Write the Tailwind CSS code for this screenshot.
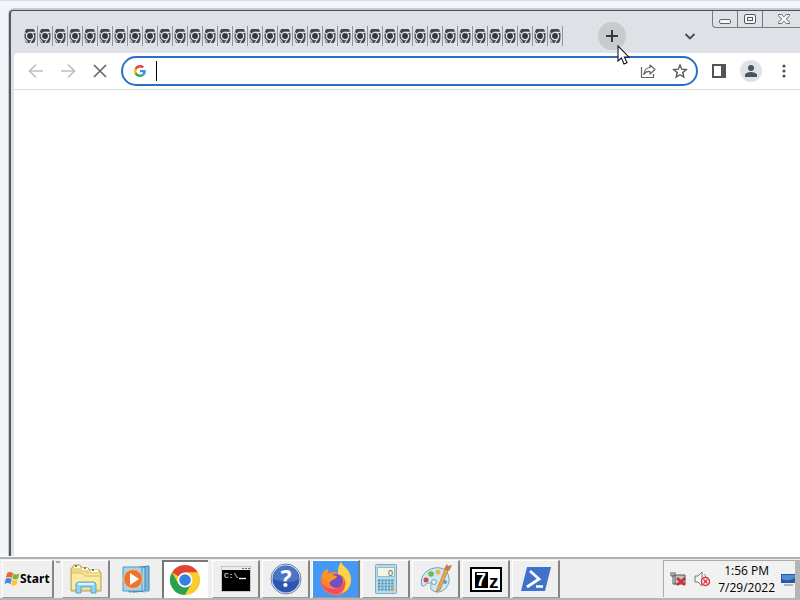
<!DOCTYPE html>
<html lang="en">
<head>
<meta charset="utf-8">
<title>Desktop</title>
<script src="https://cdn.jsdelivr.net/npm/@tailwindcss/browser@4"></script>
</head>
<body class="h-screen overflow-hidden bg-[#f2f5fa] font-['Noto_Sans','Open_Sans',sans-serif] text-black">
<svg class="hidden">
  <symbol id="mono-chrome" viewBox="0 0 12 16">
    <path d="M2.500 1h7q2 1.500 2 7t-2 7h-7q-2-1.500-2-7t2-7Z" fill="#42474c"/>
    <circle cx="6" cy="8" r="3.600" fill="#33383d" stroke="#dfe2e7" stroke-width="1.300"/>
    <path d="M1 4.500 3 7M6 4.400h5.500M9 10.500 6 15M.5 10.500 3.500 14.500" fill="none" stroke="#dfe2e7" stroke-width="1.200"/>
  </symbol>
</svg>
<div class="flex h-full flex-col">
  <main class="min-h-0 flex-1 border-t border-[#d9dde2] pt-[7px] pl-2">
    <section class="flex h-full flex-col rounded-tl-md border-t-2 border-l border-[#c5cad2]">
      <div class="flex min-h-0 flex-1 flex-col rounded-tl border-t border-l-2 border-t-[#4d5055] border-l-[#55585e] bg-[#dee1e6]">
        <header class="relative flex h-[42px] shrink-0 items-center pt-2 pl-3">
          <nav id="tabs" aria-label="Tabs" class="flex items-center"></nav>
          <button aria-label="New tab" class="ml-[35px] flex size-7 items-center justify-center rounded-full bg-[#c8cbce]">
            <svg class="size-3" viewBox="0 0 12 12" fill="none" stroke="#35383c" stroke-width="2"><path d="M6 0v12M0 6h12"/></svg>
          </button>
          <button aria-label="Search tabs" class="ml-[58px] flex size-3 items-center justify-center">
            <svg class="size-3" viewBox="0 0 12 12" fill="none" stroke="#45494e" stroke-width="1.800"><path d="m1.500 4 4.500 4.500L10.500 4"/></svg>
          </button>
          <div class="absolute top-0 right-0 flex h-[17px] overflow-hidden rounded-bl border-b border-l border-[#777a80]">
            <button aria-label="Minimize" class="flex w-[25px] items-center justify-center border-r border-[#777a80]">
              <svg class="h-4 w-3" viewBox="0 0 12 16" fill="#f5f6f8" stroke="#62666c"><rect x=".5" y="8.500" width="11" height="4" rx="1.500"/></svg>
            </button>
            <button aria-label="Restore" class="flex w-[25px] items-center justify-center border-r border-[#777a80]">
              <svg class="h-4 w-3" viewBox="0 0 12 16" fill="#f5f6f8" stroke="#55595f"><rect x=".5" y="3.500" width="11" height="9" rx="1.500"/><rect x="3.500" y="6.500" width="5" height="3"/></svg>
            </button>
            <button aria-label="Close" class="flex w-[37px] items-center justify-center pl-1">
              <svg class="h-4 w-3" viewBox="0 0 12 16" fill="#f5f6f8" stroke="#666a70"><path d="M.5 3.500h3.200L6 5.800l2.300-2.300h3.200v1.200L8.300 8l3.200 3.300v1.200H8.300L6 10.200l-2.300 2.300H.5v-1.200L3.700 8 .5 4.700Z"/></svg>
            </button>
          </div>
        </header>
        <div class="ml-[3px] flex h-[37px] shrink-0 items-center rounded-tl border-b border-[#dadce0] bg-white pr-2 pl-[14px]">
          <div class="flex shrink-0 gap-4 text-[#bcbec1]">
            <button aria-label="Back"><svg class="size-4" viewBox="0 0 16 16" fill="none" stroke="currentColor" stroke-width="1.600"><path d="M15 8H2M8 1.500 1.500 8 8 14.500"/></svg></button>
            <button aria-label="Forward"><svg class="size-4" viewBox="0 0 16 16" fill="none" stroke="currentColor" stroke-width="1.600"><path d="M1 8h13M8 1.500 14.500 8 8 14.500"/></svg></button>
            <button aria-label="Stop" class="text-[#606469]"><svg class="size-4" viewBox="0 0 16 16" fill="none" stroke="currentColor" stroke-width="1.600"><path d="m2 2 12 12M14 2 2 14"/></svg></button>
          </div>
          <div class="ml-[13px] flex h-[30px] min-w-0 flex-1 items-center rounded-full border-2 border-[#2a70c4] bg-white pr-2 pl-[11px]">
            <svg class="size-3 shrink-0" viewBox="0 0 48 48"><path fill="#EA4335" d="M24 9.500c3.540 0 6.710 1.220 9.210 3.600l6.850-6.850C35.900 2.380 30.470 0 24 0 14.620 0 6.510 5.380 2.560 13.220l7.980 6.190C12.430 13.720 17.740 9.500 24 9.500z"/><path fill="#4285F4" d="M46.980 24.550c0-1.570-.15-3.090-.38-4.550H24v9.020h12.940c-.58 2.960-2.260 5.480-4.780 7.180l7.730 6c4.510-4.180 7.090-10.360 7.090-17.650z"/><path fill="#FBBC05" d="M10.530 28.590A14.500 14.500 0 0 1 9.770 24c0-1.600.27-3.140.76-4.590l-7.980-6.190A23.900 23.900 0 0 0 0 24c0 3.880.92 7.540 2.560 10.780l7.970-6.190z"/><path fill="#34A853" d="M24 48c6.480 0 11.930-2.130 15.890-5.810l-7.730-6c-2.150 1.450-4.920 2.300-8.160 2.300-6.260 0-11.570-4.220-13.470-9.910l-7.980 6.190C6.510 42.620 14.620 48 24 48z"/></svg>
            <span class="ml-2.5 h-5 w-px shrink-0 bg-black"></span>
            <input aria-label="Address and search bar" class="min-w-0 flex-1 bg-transparent text-sm outline-none">
            <button aria-label="Share"><svg class="size-4" viewBox="0 0 16 16" fill="none" stroke="#606469" stroke-width="1.200"><path d="M1.500 4v10.500h12V11M10 2l5 4.500-5 4.500V8.500Q6 8 3.800 11.500 4.500 5 10 4.500Z" stroke-linejoin="round"/></svg></button>
            <button aria-label="Bookmark this page" class="ml-4"><svg class="size-4" viewBox="0 0 16 16" fill="none" stroke="#55595e" stroke-width="1.400"><path d="m8 2 1.700 4.200 4.600.4-3.500 3 1 4.400L8 11.700 4.200 14l1-4.400-3.500-3 4.600-.4Z"/></svg></button>
          </div>
          <button aria-label="Side panel" class="ml-[14px]"><svg class="size-[14px]" viewBox="0 0 14 14"><path fill="#505459" fill-rule="evenodd" d="M0 0h14v14H0ZM2 2v10h7V2Z"/></svg></button>
          <button aria-label="Profile" class="ml-[14px] flex size-[22px] items-center justify-center rounded-full bg-[#dfe2e7]"><svg class="size-3" viewBox="0 0 12 12" fill="#4c525b"><circle cx="6" cy="3" r="3"/><path d="M0 12v-2c0-2 4-3 6-3s6 1 6 3v2Z"/></svg></button>
          <button aria-label="Menu" class="ml-[14px]"><svg class="h-4 w-4" viewBox="0 0 16 16" fill="#505459"><circle cx="8" cy="3" r="1.600"/><circle cx="8" cy="8" r="1.600"/><circle cx="8" cy="13" r="1.600"/></svg></button>
        </div>
        <article class="ml-[3px] flex-1 bg-white"></article>
      </div>
    </section>
  </main>
  <footer class="flex h-[44px] shrink-0 border-t border-white bg-[#efefef]">
    <div class="flex min-w-0 flex-1 items-stretch border-y-2 border-t-[#b1b1b1] border-b-[#b5b5b5] pt-px pr-1">
      <button class="ml-0.5 flex w-[52px] items-center border-t border-r-2 border-b border-l border-t-white border-r-[#858585] border-b-[#999] border-l-white pl-px text-xs font-bold">
        <svg class="size-4 shrink-0" viewBox="0 0 16 16"><path fill="#ee6530" d="M3 2q3-2 6 0L8 7Q5 5 2 7Z"/><path fill="#76b83f" d="M9.500 2.500q3 2 6 0L14 7.500q-3 2-5.500 0Z"/><path fill="#418bd8" d="M1.700 8q3-2 6 0L6.500 13q-3-2-6 0Z"/><path fill="#fbc832" d="M8.300 8.500q3 2 5.700 0l-1.200 5q-3 2-5.700 0Z"/></svg>
        <span class="font-['Open_Sans','Noto_Sans',sans-serif]">Start</span>
      </button>
      <span class="mt-px ml-0.5 w-1 border-t-2 border-t-[#aaa]"></span>
      <nav aria-label="Running programs" class="ml-0.5 flex gap-0.5">
        <button aria-label="File Explorer" class="flex w-12 items-center justify-center border-t border-r-2 border-b border-l border-t-white border-r-[#858585] border-b-[#999] border-l-white">
          <svg class="size-9" viewBox="0 0 36 36"><path d="M3 30V8l3-4h6l2 3h6l2 2h9l2 3v18Z" fill="#f0d77d" stroke="#bda05a"/><path d="M6 5h6v2H6ZM14 7h6v2h-6ZM23 9h7v2h-7Z" fill="#fff"/><path d="M7 5h2M16 7h2M24 9h2" stroke="#6e8752" stroke-width="2"/><path d="M4 11h11l3 2h14v15H4Z" fill="#fbeaa2"/><path d="M3 12h11l3 3h15" stroke="#d3b565" fill="none"/><path d="M8 32V24q0-3 3-3h14q3 0 3 3v8h-5v-6H13v6Z" fill="#91d2ed" stroke="#53a9d0"/><path d="M10 23h16" stroke="#dff5ff" stroke-width="2"/></svg>
        </button>
        <button aria-label="Media Player" class="flex w-12 items-center justify-center">
          <svg class="size-8" viewBox="0 0 32 32"><path d="m13 5 16-2v25l-16 1Z" fill="#77b8db" stroke="#4386b5"/><path d="m9 5 16-1v24l-16 1Z" fill="#a6d8ed" stroke="#4386b5"/><path d="M3 4h19v24H3Z" fill="#a2d6ed" stroke="#5695bc"/><path d="m22 29 9-2-7 3Z" fill="#abd5e7"/><circle cx="13" cy="16" r="9.500" fill="#ee7530" stroke="#f9bd91"/><path d="m10 10 9 6-9 6Z" fill="white"/></svg>
        </button>
        <button aria-label="Google Chrome" class="flex w-[46px] items-center border-t-2 border-l-2 border-[#777] bg-white pl-[5px]">
          <svg class="size-8" viewBox="0 0 32 32"><circle cx="16" cy="16" r="15" fill="#f9cd30"/><path d="M16 16 3 8.500A15 15 0 0 1 29 8.500H16Z" fill="#df4537"/><path d="M3 8.500A15 15 0 0 0 16 31l6.500-11.300L9.500 19.700Z" fill="#27a252"/><path d="M16 8.500h13A15 15 0 0 1 16 31l6.500-11.300Z" fill="#f9cd30"/><circle cx="16" cy="16" r="7.500" fill="white"/><circle cx="16" cy="16" r="5.800" fill="#3480e5"/></svg>
        </button>
        <button aria-label="Command Prompt" class="ml-0.5 flex w-12 items-center justify-center border-t border-r-2 border-b border-l border-t-white border-r-[#858585] border-b-[#999] border-l-white">
          <svg class="size-8" viewBox="0 0 32 32"><path d="M1 3h30v26H1Z" fill="#bfc6ca"/><path d="M2 4h28v3H2Z" fill="#e8edef"/><path d="M22 5.500h2m1 0h2m1 0h2" stroke="#647079"/><path d="M2 7h28v21H2Z"/><text x="4" y="15" fill="white" font-family="Liberation Mono" font-size="8">C:\</text><path d="M19 15.500h7" stroke="white" stroke-width="1.300"/></svg>
        </button>
        <button aria-label="Help" class="flex w-12 items-center justify-center border-t border-r-2 border-b border-l border-t-white border-r-[#858585] border-b-[#999] border-l-white">
          <svg class="size-8" viewBox="0 0 32 32"><circle cx="16" cy="16" r="15" fill="#dce6f4" stroke="#6c84aa"/><circle cx="16" cy="16" r="13.500" fill="#2e56ae"/><path d="M3 16a13 13 0 0 1 26 0Q21 22 3 16Z" fill="#4b76c5"/><text x="16" y="24" text-anchor="middle" fill="white" font-family="Noto Sans" font-weight="bold" font-size="23">?</text></svg>
        </button>
        <button aria-label="Firefox" class="flex w-12 items-center justify-center border-t border-r-2 border-b border-l border-t-white border-r-[#6d7e91] border-b-[#999] border-l-white bg-[#4399f5]">
          <svg class="size-9" viewBox="0 0 36 36"><path d="M20 10Q20 5 23 1q1 3 5 6 5 5 5 13A15 14 0 0 1 3 20Q3 14 6 10l1 3 3-5v4l5-1 5 1Z" fill="#ff842c"/><path d="M20 10q0-5 3-9 1 3 5 6 5 5 5 13-1 9-9 12 7-9 1-17l-5-2Z" fill="#ffd34c"/><path d="M3 19q2 8 12 9 9 0 12-9 1 10-7 14A15 14 0 0 1 3 19Z" fill="#fa4966"/><circle cx="18" cy="20" r="7" fill="#7251bf"/><path d="M4 15q1-6 6-7v4l5 2q2 1 4 1-1 3-5 4l-3 3q-5-4-7-7Z" fill="#ff932b"/></svg>
        </button>
        <button aria-label="Calculator" class="flex w-12 items-center justify-center border-t border-r-2 border-b border-l border-t-white border-r-[#858585] border-b-[#999] border-l-white">
          <svg class="size-8" viewBox="0 0 32 32"><rect x="5.500" y="1.500" width="21" height="29" rx="1" fill="#b4dced" stroke="#7fabc0"/><rect x="7.500" y="4.500" width="17" height="9" fill="#f4f6e4" stroke="#a2b9b9"/><text x="18" y="13" fill="#526372" font-family="Liberation Sans" font-size="9">0</text><path d="M8 17.500h16M8 20.500h16M8 23.500h16M8 26.500h16" stroke="#5091bb" stroke-width="2" stroke-dasharray="2.300 1"/><path d="M23 23v5" stroke="#d8a53a" stroke-width="2"/></svg>
        </button>
        <button aria-label="Paint" class="flex w-12 items-center justify-center border-t border-r-2 border-b border-l border-t-white border-r-[#858585] border-b-[#999] border-l-white">
          <svg class="size-8" viewBox="0 0 32 32"><path d="M2 23C-1 15 5 7 14 5c10-2 16 5 15 13-1 9-11 14-17 9-4-3 2-7-3-7-3 0-4 4-7 3Z" fill="#cfe7f1" stroke="#6f9fb9"/><circle cx="14" cy="19" r="2.500" fill="#efefef" stroke="#749eb5"/><circle cx="6" cy="17" r="2.500" fill="#d44352"/><circle cx="11" cy="11" r="2.800" fill="#70b557"/><circle cx="18" cy="9" r="2.500" fill="#eab942"/><circle cx="25" cy="19" r="2" fill="#5999dc"/><path d="m25 6-9 23 4-2 8-20Z" fill="#e8a84b" stroke="#b57b38" stroke-width=".7"/><path d="m24 6 3-5 1 2 4-1-3 6Z" fill="#b78148"/></svg>
        </button>
        <button aria-label="7-Zip" class="flex w-12 items-center justify-center border-t border-r-2 border-b border-l border-t-white border-r-[#858585] border-b-[#999] border-l-white">
          <svg class="size-8" viewBox="0 0 32 32"><rect x="1" y="5" width="30" height="23" fill="white" stroke="black" stroke-width="2"/><path d="M5 9h13v16H5Z"/><text x="6" y="23" fill="white" font-family="Liberation Sans" font-weight="bold" font-size="18">7</text><text x="19" y="25" font-family="Liberation Sans" font-weight="bold" font-size="19">z</text></svg>
        </button>
        <button aria-label="PowerShell" class="flex w-12 items-center justify-center border-t border-r-2 border-b border-l border-t-white border-r-[#858585] border-b-[#999] border-l-white">
          <svg class="size-8" viewBox="0 0 32 32"><path d="M7 4h24l-6 24H1Z" fill="#3f72cb"/><path d="m10 8 9 8L7 24" fill="none" stroke="white" stroke-width="2.800"/><path d="M16 23.500h7" stroke="white" stroke-width="2.500"/></svg>
        </button>
      </nav>
      <aside class="mb-px ml-auto flex items-center border-t border-l border-t-[#aaa] border-l-[#aaa] bg-[#f1f1f1] pl-1.5">
        <svg class="size-4" viewBox="0 0 16 16"><path d="M5 4h10v9H5Z" fill="#bbc4c9" stroke="#555"/><path d="M1 1v4h2v8h3M5 1v4H3M3 1v4" fill="none" stroke="#555"/><path d="m7 7 8 7m0-7-8 7" stroke="#d22c34" stroke-width="2.500"/></svg>
        <svg class="ml-2 size-4" viewBox="0 0 16 16"><path d="M1 5h3l4-4v14l-4-4H1Z" fill="#f8f8f8" stroke="#777"/><path d="M10 3q2 1 2 4" fill="none" stroke="#888"/><circle cx="11.500" cy="10.500" r="4" fill="#fff" stroke="#d52e38" stroke-width="1.400"/><path d="m9.500 8.500 4 4m0-4-4 4" stroke="#d52e38" stroke-width="1.400"/></svg>
        <time class="ml-2 text-center font-['Open_Sans','Noto_Sans',sans-serif] text-xs leading-[17px]"><span class="block">1:56 PM</span><span class="block">7/29/2022</span></time>
        <svg class="ml-1.5 h-4 w-[14px]" viewBox="0 0 14 16"><path d="M0 3h14v9H0Z" fill="#245ba7"/><path d="M1 4h13v3Q6 11 1 8Z" fill="#4f8ed3"/><path d="M3 14h9" stroke="#6a7984" stroke-width="1"/></svg>
      </aside>
      <button aria-label="Show desktop" class="-mr-1 w-[5px] bg-[#b5b5b5]"></button>
    </div>
  </footer>
</div>
<svg class="pointer-events-none absolute top-[45px] left-[617px] h-5 w-[14px]" viewBox="0 0 14 20"><path d="M1 1v15l3.500-3 2.500 6 3-1.300-2.600-5.600H12Z" fill="white" stroke="#16181f" stroke-width="1.100"/></svg>
<script>
const tabs = document.getElementById('tabs');
for (let i = 0; i < 36; i++) {
  tabs.insertAdjacentHTML('beforeend', '<button aria-label="Tab ' + (i + 1) + '" class="flex h-5 w-[15px] items-center justify-center border-r border-[#92969b]"><svg class="h-4 w-3" viewBox="0 0 12 16"><use href="#mono-chrome"/></svg></button>');
}
</script>
</body>
</html>
